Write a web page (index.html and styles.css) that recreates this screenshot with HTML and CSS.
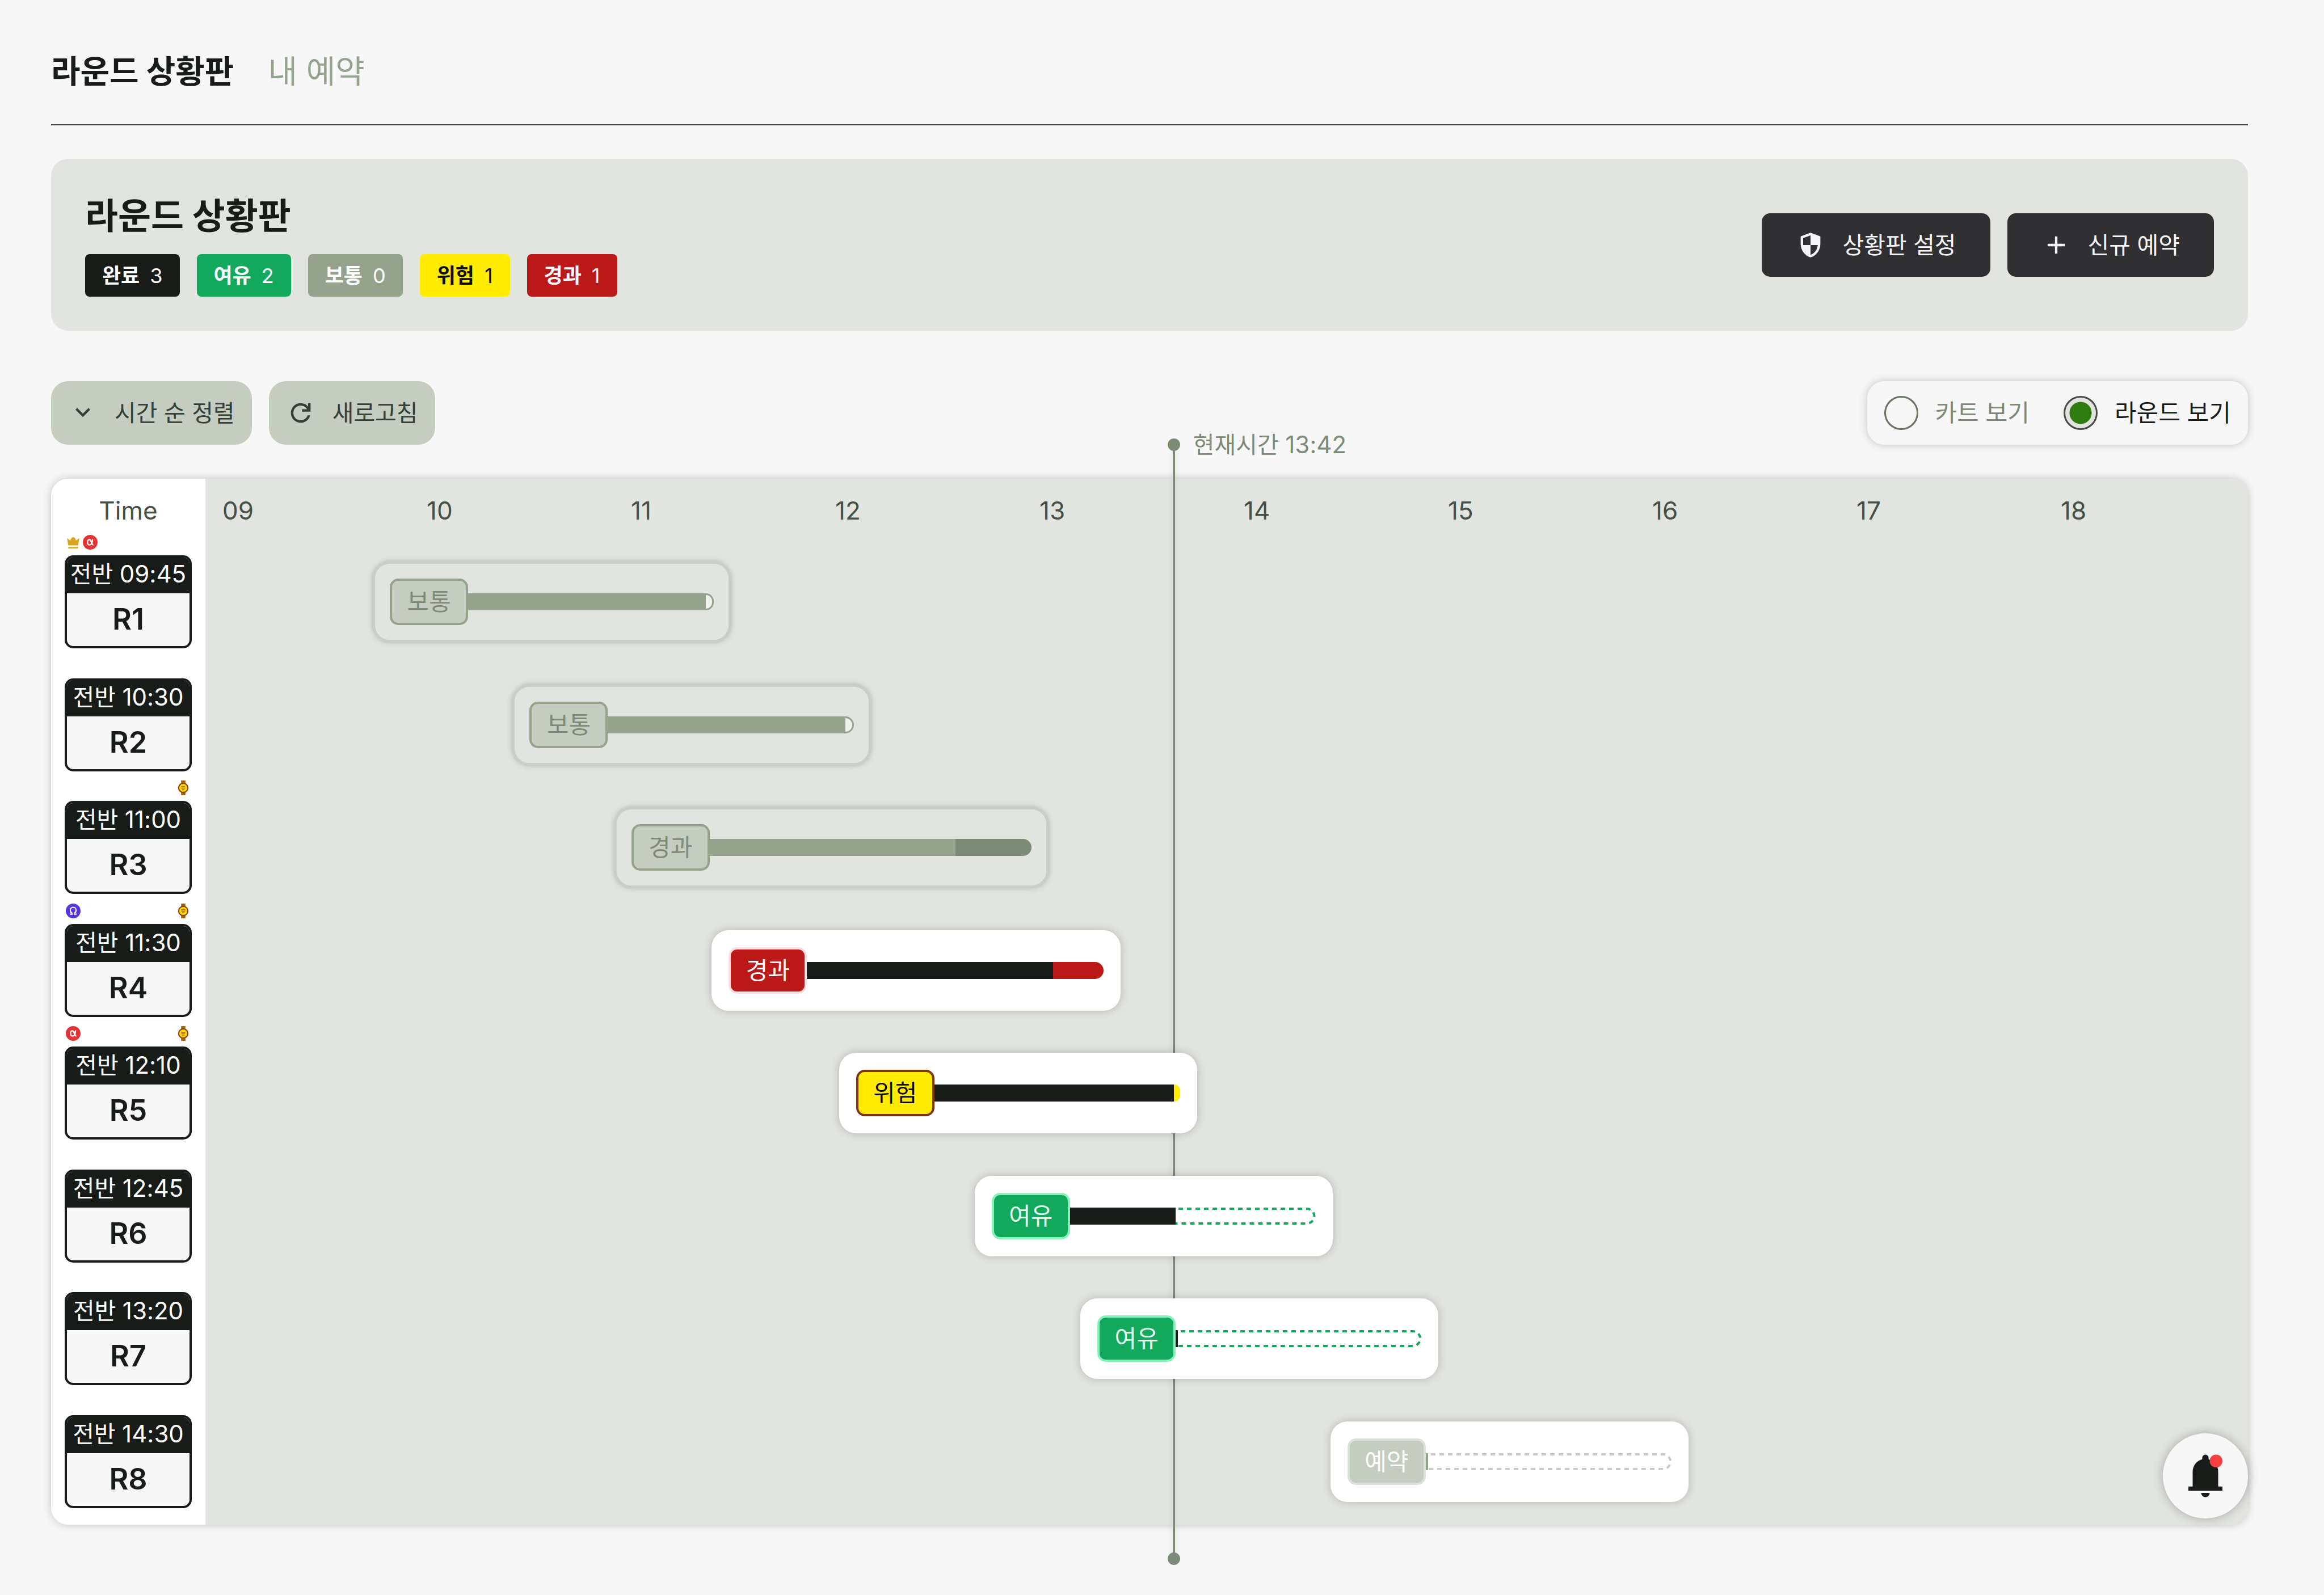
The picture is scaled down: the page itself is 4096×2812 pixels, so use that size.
FILE: index.html
```html
<!DOCTYPE html>
<html lang="ko">
<head>
<meta charset="utf-8">
<meta name="viewport" content="width=device-width, initial-scale=1">
<title>라운드 상황판</title>
<link rel="stylesheet" href="styles.css">
</head>
<body>
<svg class="sprite" aria-hidden="true">
  <symbol id="i-crown" viewBox="0 0 24 24">
    <path fill="#daa520" d="M2 5l5 4 2.500-4.500L12 3.500l2.500 1L17 9l5-4-2 12H4z"/>
    <path fill="#daa520" d="M4 19.500h16v2.500H4z"/>
  </symbol>
  <symbol id="i-alpha" viewBox="0 0 24 24">
    <circle cx="12" cy="12" r="12" fill="#e53235"/>
    <path fill="none" stroke="#fff" stroke-width="2.200" d="M15.800 7C15.500 12 14 16.300 10.900 16.300C8.800 16.300 7.600 14.500 7.600 12S8.800 7.700 10.900 7.700C13.800 7.700 14.300 16.300 17.200 16.300"/>
  </symbol>
  <symbol id="i-omega" viewBox="0 0 24 24">
    <circle cx="12" cy="12" r="12" fill="#5535e0"/>
    <path fill="none" stroke="#fff" stroke-width="2" d="M6.500 17.200H10V15.500C8.200 14.500 7.300 13 7.300 11C7.300 8 9.300 6 12 6S16.700 8 16.700 11C16.700 13 15.800 14.500 14 15.500V17.200H17.500"/>
  </symbol>
  <symbol id="i-watch" viewBox="0 0 24 24">
    <path fill="#a8610c" d="M8.500 0h7v5h-7zM8.500 19h7v5h-7z"/>
    <circle cx="12" cy="12" r="7.500" fill="#ffd900" stroke="#8f4310" stroke-width="2"/>
    <path stroke="#a8610c" stroke-width="1.500" d="M8.500 10.200h7M9 12.500h6M10.500 14.800h3"/>
  </symbol>
</svg>

<div class="page">
  <nav class="tabs">
    <a class="tab tab--active" href="#board" aria-current="page">라운드 상황판</a>
    <a class="tab" href="#mine">내 예약</a>
  </nav>

  <section class="summary">
    <div class="summary__info">
      <h1 class="summary__title">라운드 상황판</h1>
      <ul class="badges">
        <li class="badge badge--done"><b>완료</b><span>3</span></li>
        <li class="badge badge--free"><b>여유</b><span>2</span></li>
        <li class="badge badge--normal"><b>보통</b><span>0</span></li>
        <li class="badge badge--risk"><b>위험</b><span>1</span></li>
        <li class="badge badge--over"><b>경과</b><span>1</span></li>
      </ul>
    </div>
    <div class="summary__actions">
      <button class="btn btn--dark" type="button">
        <svg class="icon" viewBox="0 0 24 24" aria-hidden="true"><path d="M12 22q-3.475-.875-5.738-3.988T4 11.100V5l8-3 8 3v6.100q0 3.800-2.262 6.913T12 22m0-2.100q2.425-.75 4.050-2.963T17.950 12H12V4.125l-6 2.250v5.175q0 .175.050.450H12z"/></svg>
        <span>상황판 설정</span>
      </button>
      <button class="btn btn--dark" type="button">
        <svg class="icon" viewBox="0 0 24 24" aria-hidden="true"><path d="M11 13H5v-2h6V5h2v6h6v2h-6v6h-2z"/></svg>
        <span>신규 예약</span>
      </button>
    </div>
  </section>

  <div class="toolbar">
    <div class="toolbar__group">
      <button class="btn btn--soft" type="button">
        <svg class="icon" viewBox="0 0 24 24" aria-hidden="true"><path d="m12 15.400-6-6L7.400 8l4.600 4.600L16.600 8 18 9.400z"/></svg>
        <span>시간 순 정렬</span>
      </button>
      <button class="btn btn--soft" type="button">
        <svg class="icon" viewBox="0 0 24 24" aria-hidden="true"><path d="M12 20q-3.350 0-5.675-2.325T4 12t2.325-5.675T12 4q1.725 0 3.300.713T18 6.750V4h2v7h-7V9h4.200q-.8-1.400-2.187-2.200T12 6Q9.500 6 7.750 7.750T6 12t1.750 4.250T12 18q1.925 0 3.475-1.100T17.650 14h2.100q-.7 2.650-2.850 4.325T12 20"/></svg>
        <span>새로고침</span>
      </button>
    </div>
    <div class="switch" role="radiogroup" aria-label="보기 방식">
      <label class="switch__item"><input type="radio" name="view" value="cart"><span>카트 보기</span></label>
      <label class="switch__item"><input type="radio" name="view" value="round" checked><span>라운드 보기</span></label>
    </div>
  </div>

  <section class="board" id="board">
    <div class="rounds">
      <div class="rounds__head">Time</div>
      <div class="round">
        <div class="round__marks"><svg><use href="#i-crown"/></svg><svg><use href="#i-alpha"/></svg></div>
        <div class="round__card"><div class="round__time">전반 <time>09:45</time></div><div class="round__name">R1</div></div>
      </div>
      <div class="round">
        <div class="round__marks"></div>
        <div class="round__card"><div class="round__time">전반 <time>10:30</time></div><div class="round__name">R2</div></div>
      </div>
      <div class="round">
        <div class="round__marks"><svg class="mark--end"><use href="#i-watch"/></svg></div>
        <div class="round__card"><div class="round__time">전반 <time>11:00</time></div><div class="round__name">R3</div></div>
      </div>
      <div class="round">
        <div class="round__marks"><svg><use href="#i-omega"/></svg><svg class="mark--end"><use href="#i-watch"/></svg></div>
        <div class="round__card"><div class="round__time">전반 <time>11:30</time></div><div class="round__name">R4</div></div>
      </div>
      <div class="round">
        <div class="round__marks"><svg><use href="#i-alpha"/></svg><svg class="mark--end"><use href="#i-watch"/></svg></div>
        <div class="round__card"><div class="round__time">전반 <time>12:10</time></div><div class="round__name">R5</div></div>
      </div>
      <div class="round">
        <div class="round__marks"></div>
        <div class="round__card"><div class="round__time">전반 <time>12:45</time></div><div class="round__name">R6</div></div>
      </div>
      <div class="round">
        <div class="round__marks"></div>
        <div class="round__card"><div class="round__time">전반 <time>13:20</time></div><div class="round__name">R7</div></div>
      </div>
      <div class="round">
        <div class="round__marks"></div>
        <div class="round__card"><div class="round__time">전반 <time>14:30</time></div><div class="round__name">R8</div></div>
      </div>
    </div>

    <div class="timeline">
      <div class="now" style="left: 47.41%">
        <div class="now__label">현재시간 <time>13:42</time></div>
      </div>
      <div class="hours">
        <span>09</span><span>10</span><span>11</span><span>12</span><span>13</span><span>14</span><span>15</span><span>16</span><span>17</span><span>18</span>
      </div>
      <div class="lane">
        <div class="pill pill--past" style="margin-left: 8.2%; width: 17.53%">
          <span class="tag">보통</span>
          <div class="track"><div class="track__fill" style="width: 96.6%"></div><div class="track__cap"></div></div>
        </div>
      </div>
      <div class="lane">
        <div class="pill pill--past" style="margin-left: 15.04%; width: 17.53%">
          <span class="tag">보통</span>
          <div class="track"><div class="track__fill" style="width: 96.6%"></div><div class="track__cap"></div></div>
        </div>
      </div>
      <div class="lane">
        <div class="pill pill--past pill--late" style="margin-left: 20.02%; width: 21.27%">
          <span class="tag">경과</span>
          <div class="track"><div class="track__fill" style="width: 76.3%"></div><div class="track__cap"></div></div>
        </div>
      </div>
      <div class="lane">
        <div class="pill pill--over" style="margin-left: 24.79%; width: 20.02%">
          <span class="tag">경과</span>
          <div class="track"><div class="track__fill" style="width: 82.9%"></div><div class="track__cap"></div></div>
        </div>
      </div>
      <div class="lane">
        <div class="pill pill--risk" style="margin-left: 31.02%; width: 17.53%">
          <span class="tag">위험</span>
          <div class="track"><div class="track__fill" style="width: 97.4%"></div><div class="track__cap"></div></div>
        </div>
      </div>
      <div class="lane">
        <div class="pill pill--free" style="margin-left: 37.66%; width: 17.53%">
          <span class="tag">여유</span>
          <div class="track"><div class="track__fill" style="width: 43.1%"></div><svg class="track__rest" aria-hidden="true"><rect x="-18" y="2" height="26" rx="13"/></svg></div>
        </div>
      </div>
      <div class="lane">
        <div class="pill pill--free" style="margin-left: 42.84%; width: 17.53%">
          <span class="tag">여유</span>
          <div class="track"><div class="track__fill" style="width: 0.9%"></div><svg class="track__rest" aria-hidden="true"><rect x="-18" y="2" height="26" rx="13"/></svg></div>
        </div>
      </div>
      <div class="lane">
        <div class="pill pill--booked" style="margin-left: 55.08%; width: 17.53%">
          <span class="tag">예약</span>
          <div class="track"><div class="track__fill" style="width: 0.9%"></div><svg class="track__rest" aria-hidden="true"><rect x="-18" y="2" height="26" rx="13"/></svg></div>
        </div>
      </div>
    </div>
  </section>
</div>

<button class="bell" type="button" aria-label="알림">
  <svg viewBox="0 0 24 24" aria-hidden="true">
    <path fill="#171c18" d="M4 19v-2h2v-7q0-2.075 1.250-3.688T10.500 4.200v-.7q0-.625.438-1.062T12 2t1.063.438T13.500 3.500v.7q2 .5 3.250 2.113T18 10v7h2v2zm8 3q-.825 0-1.412-.587T10 20h4q0 .825-.587 1.413T12 22"/>
    <circle cx="17" cy="5" r="3" fill="#f5403f"/>
  </svg>
</button>
</body>
</html>
```
FILE: styles.css
```css
:root {
  --page: #f7f7f7;
  --panel: #e2e5df;
  --ink: #171c18;
  --sage: #95a38d;
  --sage-dark: #7b8b76;
  --sage-light: #c5ccc0;
  --green: #12a95d;
  --yellow: #ffec00;
  --red: #bb1818;
  --shadow: 0 0 15px rgba(0, 0, 0, 0.22);
}

* { box-sizing: border-box; }

body {
  margin: 0;
  background: var(--page);
  color: var(--ink);
  font-family: "Inter", "Noto Sans CJK KR", sans-serif;
  font-size: 42px;
  line-height: 60px;
}

button { font: inherit; border: 0; cursor: pointer; }

.sprite { display: none; }

.page {
  display: flex;
  flex-direction: column;
  min-height: 100vh;
  padding: 0 134px 124px 90px;
}

/* Tabs */
.tabs {
  display: flex;
  gap: 60px;
  padding: 84px 0 51px;
  border-bottom: 2px solid #454845;
}

.tab {
  color: var(--sage);
  font-size: 56px;
  line-height: 84px;
  text-decoration: none;
}

.tab--active { color: var(--ink); font-weight: 700; }

/* Summary panel */
.summary {
  display: flex;
  align-items: center;
  justify-content: space-between;
  margin-top: 59px;
  padding: 60px;
  border-radius: 30px;
  background: var(--panel);
}

.summary__title {
  margin: 0 0 28px;
  font-size: 63px;
  line-height: 80px;
}

.summary__actions { display: flex; gap: 30px; }

.badges {
  display: flex;
  gap: 30px;
  margin: 0;
  padding: 0;
  list-style: none;
}

.badge {
  display: flex;
  align-items: center;
  gap: 18px;
  height: 75px;
  padding: 0 30px;
  border-radius: 8px;
  color: #fff;
  font-size: 36px;
}

.badge--done { background: var(--ink); }
.badge--free { background: var(--green); }
.badge--normal { background: var(--sage); }
.badge--risk { background: var(--yellow); color: #0c0c0c; }
.badge--over { background: var(--red); }

/* Buttons */
.btn {
  display: flex;
  align-items: center;
  gap: 30px;
  height: 112px;
  font-size: 41px;
  white-space: nowrap;
}

.btn--dark {
  padding: 0 60px;
  border-radius: 15px;
  background: #303033;
  color: #f5f6f8;
}

.btn--soft {
  padding: 0 30px;
  border-radius: 30px;
  background: var(--sage-light);
  color: #343f35;
}

.icon { width: 52px; height: 52px; fill: currentColor; }

/* Toolbar */
.toolbar {
  display: flex;
  justify-content: space-between;
  margin: 89px 0 60px;
}

.toolbar__group { display: flex; gap: 30px; }

.switch {
  display: flex;
  align-items: center;
  gap: 60px;
  height: 112px;
  padding: 0 30px;
  border-radius: 30px;
  background: var(--page);
  box-shadow: var(--shadow);
}

.switch__item {
  display: flex;
  align-items: center;
  gap: 30px;
  color: var(--sage-dark);
}

.switch__item:has(:checked) { color: var(--ink); }

.switch input {
  appearance: none;
  width: 60px;
  height: 60px;
  margin: 0;
  border: 3px solid #66735f;
  border-radius: 50%;
}

.switch input:checked {
  border-color: #454b45;
  background: radial-gradient(circle, #2f7d10 19px, var(--panel) 20px);
}

/* Board */
.board {
  display: flex;
  flex: 1;
  border-radius: 30px;
  box-shadow: var(--shadow);
}

.rounds,
.timeline {
  display: flex;
  flex-direction: column;
  padding-bottom: 13px;
  color: #454f46;
}

.rounds {
  width: 272px;
  padding-left: 24px;
  padding-right: 24px;
  border-radius: 30px 0 0 30px;
  background: #fff;
}

.rounds__head,
.hours {
  height: 99px;
  padding-top: 28px;
  font-size: 44px;
  line-height: 56px;
}

.rounds__head { text-align: center; }

.round { flex: 1; }

.round__marks {
  display: flex;
  gap: 4px;
  height: 36px;
  padding: 0 2px;
}

.round__marks svg { width: 26px; height: 26px; }
.mark--end { margin-left: auto; }

.round__card {
  height: 164px;
  overflow: hidden;
  border: 4px solid var(--ink);
  border-radius: 15px;
  background: var(--page);
  color: var(--ink);
  text-align: center;
}

.round__time {
  height: 63px;
  margin: 0 -4px;
  background: var(--ink);
  color: #fff;
  font-size: 41px;
  line-height: 58px;
  white-space: nowrap;
}

.round__name {
  font-size: 52px;
  font-weight: 600;
  line-height: 92px;
}

time { font-size: 42px; }

.timeline {
  position: relative;
  z-index: 0;
  flex: 1;
  border-radius: 0 30px 30px 0;
  background: var(--panel);
}

.hours { display: flex; }
.hours span { flex: 1; padding-left: 30px; }

.lane {
  display: flex;
  flex: 1;
  align-items: flex-start;
  padding-top: 47px;
}

.pill {
  display: flex;
  align-items: center;
  height: 142px;
  padding: 0 30px;
  border-radius: 30px;
  background: #fff;
  box-shadow: var(--shadow);
}

.tag {
  width: 138px;
  height: 82px;
  border: 4px solid transparent;
  border-radius: 15px;
  line-height: 74px;
  text-align: center;
}

.track { display: flex; flex: 1; height: 30px; }
.track__fill { background: var(--ink); }
.track__cap { flex: 1; border-radius: 0 15px 15px 0; }
.track__rest { flex: 1; width: 0; height: 30px; overflow: hidden; }

.track__rest rect {
  width: calc(100% + 16px);
  fill: none;
  stroke: var(--green);
  stroke-width: 4px;
  stroke-dasharray: 8 7;
  stroke-dashoffset: -10px;
}

.pill--past {
  padding: 0 26px;
  border: 4px solid #c9cfc7;
  background: var(--panel);
  box-shadow: 0 0 10px rgba(80, 95, 80, 0.4);
}

.pill--past .tag { border-color: var(--sage); background: var(--sage-light); color: var(--sage-dark); }
.pill--past .track__fill { background: var(--sage); }
.pill--past .track__cap { border: 3px solid var(--sage); border-left: 0; background: #f0f2ee; }
.pill--late .track__cap { border: 0; background: var(--sage-dark); }

.pill--over .tag { border-color: #fcdfe0; background: var(--red); color: #fff; }
.pill--over .track__cap { background: var(--red); }

.pill--risk .tag { border-color: #80330c; background: var(--yellow); color: #0c0c0c; }
.pill--risk .track__cap { background: var(--yellow); }

.pill--free .tag { border-color: #86f2bb; background: var(--green); color: #e6fff1; }

.pill--booked .tag { border-color: #dbe0d8; background: var(--sage-light); color: #fff; }
.pill--booked .track__fill { background: var(--sage); }
.pill--booked .track__rest rect { stroke: var(--sage-light); }

/* Current time marker, drawn behind the pills */
.now {
  position: absolute;
  z-index: -1;
  top: -60px;
  bottom: -60px;
  width: 4px;
  margin-left: -2px;
  background: var(--sage-dark);
  box-shadow: 0 0 12px rgba(0, 0, 0, 0.12);
}

.now::before,
.now::after {
  content: "";
  position: absolute;
  left: -9px;
  width: 22px;
  height: 22px;
  border-radius: 50%;
  background: var(--sage-dark);
}

.now::before { top: -11px; }
.now::after { bottom: -11px; }

.now__label {
  position: absolute;
  top: -30px;
  left: 36px;
  color: var(--sage-dark);
  font-size: 41px;
  white-space: nowrap;
}

/* Notifications */
.bell {
  position: fixed;
  right: 134px;
  bottom: 135px;
  display: grid;
  place-items: center;
  width: 150px;
  height: 150px;
  padding: 0;
  border-radius: 50%;
  background: var(--page);
  box-shadow: 0 0 18px rgba(0, 0, 0, 0.28);
}

.bell svg { width: 90px; height: 90px; }
```
